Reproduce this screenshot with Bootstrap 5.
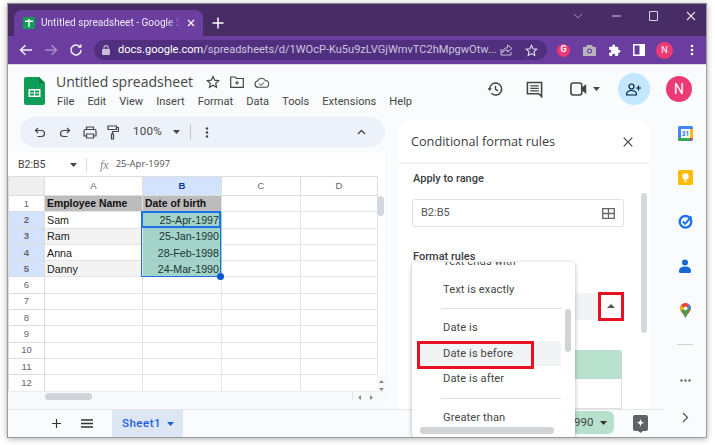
<!DOCTYPE html>
<html lang="en">
<head>
<meta charset="utf-8">
<title>Untitled spreadsheet</title>
<link href="https://cdn.jsdelivr.net/npm/bootstrap@5.3.0/dist/css/bootstrap.min.css" rel="stylesheet">
<style>
html,body{height:100%;margin:0;overflow:hidden;background:#fff}
body{font-family:Roboto,"Liberation Sans",sans-serif;color:#444746}
svg{flex:none}
.ml4{margin-left:4px}.ml5{margin-left:5px}.ml6{margin-left:6px}.ml7{margin-left:7px}.ml8{margin-left:8px}.ml9{margin-left:9px}.ml10{margin-left:10px}.ml11{margin-left:11px}.ml12{margin-left:12px}.ml13{margin-left:13px}.ml14{margin-left:14px}.ml15{margin-left:15px}.ml16{margin-left:16px}.ml17{margin-left:17px}.ml18{margin-left:18px}.ml20{margin-left:20px}.ml22{margin-left:22px}.ml27{margin-left:27px}
.gwin{position:relative;width:700px;height:435px;margin:3px 0 0 7px;background:#f9fbfd;border:1px solid #9a9a9a;border-top-color:#8a8a8a;box-shadow:0 1px 6px rgba(0,0,0,.32);overflow:hidden;display:flex;flex-direction:column}
.titlebar{height:32px;background:#472c66;flex:none;padding:6px 0 0 6px}
.gtab{width:189px;height:26px;background:#6b3fa0;border-radius:8px 8px 0 0;color:#efe9f6;font-size:10.1px;padding-left:9px;white-space:nowrap;overflow:hidden}
.ttl{width:140px;flex:none;overflow:hidden;margin-left:6px;-webkit-mask-image:linear-gradient(90deg,#000 90%,transparent)}
.winctl{margin-left:auto}
.winctl svg{display:block}
.chromebar{height:29px;background:#6a3d9f;flex:none;padding-left:10px;border-bottom:1px solid #e0dbe8}
.omni{width:453px;height:20px;margin-left:10px;background:#50307e;border-radius:10px;color:#cfc3e2;font-size:11.05px;padding:0 8px;white-space:nowrap;overflow:hidden;flex:none}
.omni b{font-weight:400;color:#fff}
.urltxt{width:373px;margin-left:8px}
.gchip{width:13px;height:13px;background:#15c39a;font-size:9px;font-weight:700}
.minin{width:17px;height:17px;font-size:9px;line-height:17px}
.appbody{flex:1;min-height:0;position:relative;display:flex;flex-direction:column}
.dochead{height:52px;flex:none;position:relative;padding-left:16px}
.logo{margin-top:12px}
.docwrap{margin-left:11px;padding-top:7px}
.doctitle{font-size:14px;color:#444746;line-height:20px;font-family:"Open Sans",Roboto,sans-serif}
.docmenu{font-size:11.1px;color:#444746;line-height:16px;gap:13px;margin-top:2px;padding-left:1px}
.headright{height:48px;padding-right:14px}
.sharebtn{margin-left:18px;width:32px;height:32px;border-radius:50%;background:#c2e7ff}
.docava{width:26px;height:26px;margin-left:16px;font-size:14px;line-height:26px}
.workarea{flex:1;min-height:0;display:flex}
.leftcol{width:390px;flex:none;display:flex;flex-direction:column;min-height:0}
.pill{height:30px;width:365px;margin-left:12px;background:#edf2fa;border-radius:15px;flex:none;position:relative}
.zoomtxt{margin-left:14px;font-size:11.6px;color:#444;letter-spacing:.2px}
.vdiv{width:1px;height:16px;background:#c7c7c7;margin-left:10px}
.collapse-i{margin-right:19px}
.namebar{height:23px;margin-top:6px;width:377px;background:#fff;font-size:10.5px;color:#444;flex:none}
.cellname{margin-left:10px;width:52px}
.nbdiv{margin-left:9px;width:1px;height:14px;background:#dadce0}
.fxi{margin-left:13px;font-family:"Liberation Serif",serif;font-style:italic;font-size:12px;color:#888}
.fxval{margin-left:7px;font-family:"Open Sans",sans-serif;font-size:9.5px;color:#555}
.sheetwrap{height:225px;width:377px;background:#fff;overflow:hidden;position:relative;flex:none}
table.gridt{table-layout:fixed;border-collapse:collapse;width:369px;font-family:"Liberation Sans",Arial,sans-serif;font-size:10.7px;color:#222}
.c0{width:36px}.c1{width:98px}.c2{width:79px}.c3{width:79px}.c4{width:77px}
table.gridt td,table.gridt th{border:1px solid #e4e4e4;padding:0 2px;height:16.3px;line-height:14px;overflow:hidden;white-space:nowrap;font-weight:400}
table.gridt thead th{height:19px;background:#fff;color:#666;text-align:center;font-size:9.5px;border-color:#ddd}
table.gridt thead th.corner{background:#efefef}
table.gridt th.rh{text-align:center;font-size:9.5px;color:#666;border-color:#ddd;padding:0}
table.gridt .selh{background:#d3e3fd;color:#0b3c8c;font-weight:600}
table.gridt td.hd{background:#bcbcbc;font-weight:700;color:#111;font-size:10.4px}
table.gridt td.alt{background:#f3f3f3}
table.gridt td.dt{background:#a3d3c9;text-align:right;border-color:#9ccec5;color:#1d3533}
.selbox{position:absolute;left:133px;top:35px;width:80px;height:66px;border:1px solid #1a73e8;pointer-events:none}
.selcur{position:absolute;left:133px;top:35px;width:80px;height:17px;border:2px solid #1a73e8}
.seldot{position:absolute;left:209px;top:97px;width:7px;height:7px;border-radius:50%;background:#0b57d0}
.vthumb{position:absolute;right:1px;top:20px;width:7px;height:20px;background:#d5d8dc;border-radius:4px}
.varr{position:absolute;right:0;top:199px;width:8px;height:26px;background:#f8f9fa}
.varr svg{display:block;margin:5px 0 0 2px}
.hstrip{position:absolute;left:0;right:0;bottom:0;height:10px;background:#f8f9fa;border-top:1px solid #eee}
.hthumb{position:absolute;left:37px;top:1px;width:47px;height:7px;background:#d0d3d8;border-radius:4px}
.harr{position:absolute;left:344px;top:0;width:25px;height:10px;border-left:1px solid #e4e4e4}
.harr svg{position:absolute;top:3px}
.ha1{left:5px}.ha2{left:17px}
.panel{width:252px;flex:none;height:289px;background:#fff;border-radius:14px 14px 0 0;position:relative;margin-top:3px}
.panelhead{height:44px;border-bottom:2px solid #f1f3f4;padding:1px 17px 0 13px;font-size:12.7px;color:#3c4043;font-family:"Open Sans",Roboto,sans-serif}
.lbl{font-size:11px;color:#3c4043;font-weight:500;margin-left:15px;line-height:16px}
.lbl1{margin-top:7px}.lbl2{margin-top:22px}
.rangebox{width:212px;height:28px;margin:12px 0 0 14px;border:1px solid #dfe1e5;border-radius:3px;font-size:11px;padding:0 8px;color:#555}
.selgray{width:186px;height:27px;margin:28px 0 0 15px;background:#f1f3f4;border-radius:3px}
.preview{width:210px;height:29px;margin:30px 0 0 14px;background:#b7e1cd;border-radius:3px 3px 0 0}
.previewb{width:210px;height:30px;margin-left:14px;border:1px solid #e0e0e0;border-top:0}
.pscroll{position:absolute;left:243px;top:73px;width:6px;height:140px;background:#d6d8dc;border-radius:3px}
.rail{flex:1;position:relative;padding-top:9px}
.railitem{height:44.2px;display:flex;justify-content:center;width:70px}
.raildiv{width:16px;margin:-3px 0 0 27px;border-color:#aaa;opacity:.5}
.raildots{margin-top:23px;height:26px;align-items:center}
.bottombar{height:28px;width:655px;flex:none;background:#f9fbfd;border-top:1px solid #e3e5e8;padding-left:44px}
.sheettab{height:100%;background:#dde6f5;color:#1a5fd6;font-size:11.5px;font-weight:500;padding:0 9px 0 10px;width:71px;margin-left:19px;letter-spacing:.5px}
.sumchip{position:absolute;left:533px;bottom:3px;width:73px;height:23px;background:#b7e1cd;border-radius:0 6px 6px 0;font-size:11.5px;color:#444;padding-left:33px;white-space:nowrap}
.explore{position:absolute;left:625px;bottom:4px}
.railnext{position:absolute;left:674px;bottom:14px}
.ddmenu{position:absolute;left:404px;top:197px;width:163px;height:175px;background:#fff;box-shadow:0 1px 4px rgba(60,64,67,.4);border-radius:3px;overflow:hidden;font-size:11.1px;color:#444746}
.dditem{height:25.4px;line-height:25px;width:144px;margin-left:5px;padding-left:26px;letter-spacing:.1px}
.ddclip{height:15px;line-height:1;margin-top:-6px}
.ddfirst{margin-top:6px}
.dditem.hov{background:#f1f3f4}
.ddsep{border-top:1px solid #e0e0e0;width:120px;margin:6px 0 6px 29px}
.ddv{position:absolute;left:153px;top:47px;width:6px;height:43px;background:#d2d4d8;border-radius:3px}
.ddh{position:absolute;left:8px;bottom:3px;width:134px;height:7px;background:#d2d4d8;border-radius:3px}
.redbox{position:absolute;border:3px solid #e81123;pointer-events:none}
.red1{left:590px;top:227px;width:26px;height:29px}
.red2{left:409px;top:276px;width:117px;height:28px}
.uparr{position:absolute;left:599px;top:239px}
.avatar{border-radius:50%;background:#ec3a74;color:#fff;text-align:center}
</style>
</head>
<body>
<div class="gwin">
  <div class="titlebar d-flex">
    <div class="gtab d-flex align-items-center">
      <svg width="12" height="12" viewBox="0 0 12 12"><rect width="12" height="12" rx="1" fill="#0f9d58"/><path d="M2 4.200h8M6 2v8" stroke="#fff" stroke-width="1.400"/></svg>
      <span class="ttl">Untitled spreadsheet - Google Sheets</span>
      <svg class="ml6" width="8" height="8" viewBox="0 0 8 8"><path d="M1 1l6 6M7 1L1 7" stroke="#fff" stroke-width="1.200"/></svg>
    </div>
    <svg class="ml6 mt-1" width="18" height="18" viewBox="0 0 18 18"><path d="M9 3.500v11M3.500 9h11" stroke="#fff" stroke-width="1.500"/></svg>
    <div class="winctl d-flex">
      <svg width="36" height="18" viewBox="0 0 36 18"><path d="M2 4l4 4 4-4" fill="none" stroke="#9b8cb0" stroke-width="1"/></svg>
      <svg width="36" height="18" viewBox="0 0 36 18"><path d="M4 6h9" stroke="#d6cfe0"/></svg>
      <svg width="36" height="18" viewBox="0 0 36 18"><path d="M5.500 1.500h8v9h-8z" fill="none" stroke="#d6cfe0"/></svg>
      <svg width="26" height="18" viewBox="0 0 26 18"><path d="M7 2l8 8M15 2l-8 8" stroke="#e6e0ee" stroke-width="1.100"/></svg>
    </div>
  </div>
  <div class="chromebar d-flex align-items-center">
    <svg width="16" height="14" viewBox="0 0 16 14"><path d="M14 7H3M7.500 2.200L2.500 7l5 4.800" fill="none" stroke="#f4f0f8" stroke-width="1.500"/></svg>
    <svg class="ml9" width="16" height="14" viewBox="0 0 16 14"><path d="M2 7h11M8.500 2.200l5 4.800-5 4.800" fill="none" stroke="#a98fcb" stroke-width="1.500"/></svg>
    <svg class="ml9" width="16" height="14" viewBox="0 0 16 14"><path d="M13 7a5 5 0 1 1-1.500-3.600" fill="none" stroke="#f4f0f8" stroke-width="1.500"/><path d="M13.500 .8v4h-4z" fill="#f4f0f8"/></svg>
    <div class="omni d-flex align-items-center">
      <svg width="8" height="10" viewBox="0 0 8 10"><rect y="4" width="8" height="6" rx="1" fill="#c9bddb"/><path d="M2 4V2.600a2 2 0 0 1 4 0V4" fill="none" stroke="#c9bddb" stroke-width="1.100"/></svg>
      <span class="urltxt"><b>docs.google.com</b>/spreadsheets/d/1WOcP-Ku5u9zLVGjWmvTC2hMpgwOtw...</span>
      <svg class="ml9" width="13" height="12" viewBox="0 0 13 12"><path d="M1 5v6h10V8M7.500 1l4.500 3.500L7.500 8V6C4.500 6 3 7 2 9c.3-3 2-5 5.500-5.200z" fill="none" stroke="#c9bddb" stroke-width="1"/></svg>
      <svg class="ml12" width="13" height="13" viewBox="0 0 24 24"><path d="M12 2.500l2.900 6.300 6.900.8-5.100 4.600 1.400 6.800L12 17.600 5.900 21l1.400-6.800-5.100-4.600 6.900-.8z" fill="none" stroke="#e7e0f0" stroke-width="2"/></svg>
    </div>
    <div class="d-flex align-items-center ml10">
      <div class="avatar gchip d-flex align-items-center justify-content-center">G</div>
      <svg class="ml13" width="13" height="12" viewBox="0 0 13 12"><path d="M0 3h3l1-2h5l1 2h3v9H0z" fill="#b9b5bd"/><circle cx="6.500" cy="7" r="2.500" fill="#6a3d9f"/><circle cx="6.500" cy="7" r="1.200" fill="#d8d6da"/></svg>
      <svg class="ml12" width="13" height="13" viewBox="0 0 24 24"><path d="M20.500 11H19V7a2 2 0 0 0-2-2h-4V3.500a2.500 2.500 0 0 0-5 0V5H4a2 2 0 0 0-2 2v3.800h1.500a2.700 2.700 0 0 1 0 5.400H2V20a2 2 0 0 0 2 2h3.800v-1.500a2.700 2.700 0 0 1 5.400 0V22H17a2 2 0 0 0 2-2v-4h1.500a2.500 2.500 0 0 0 0-5z" fill="#fff"/></svg>
      <svg class="ml12" width="12" height="12" viewBox="0 0 12 12"><path d="M0 0h12v12H0z" fill="#fff"/><path d="M1.500 1.500h5v9h-5z" fill="#6a3d9f"/></svg>
      <div class="avatar minin ml11">N</div>
      <svg class="ml17" width="4" height="12" viewBox="0 0 4 12"><circle cx="2" cy="2" r="1.300" fill="#fff"/><circle cx="2" cy="6" r="1.300" fill="#fff"/><circle cx="2" cy="10" r="1.300" fill="#fff"/></svg>
    </div>
  </div>
  <div class="appbody">
    <header class="dochead d-flex">
      <svg class="logo" width="21" height="28" viewBox="0 0 21 28"><path d="M2 0h13l6 6v20a2 2 0 0 1-2 2H2a2 2 0 0 1-2-2V2a2 2 0 0 1 2-2z" fill="#0f9d58"/><path d="M15 0l6 6h-6z" fill="#0b7a44"/><path d="M4.500 12h12v8h-12z" fill="#fff"/><path d="M6 13.600h4v1.800H6zM11 13.600h4v1.800h-4zM6 16.500h4v1.900H6zM11 16.500h4v1.900h-4z" fill="#0f9d58"/></svg>
      <div class="docwrap">
        <div class="d-flex align-items-center">
          <span class="doctitle">Untitled spreadsheet</span>
          <svg class="ml13" width="14" height="14" viewBox="0 0 24 24"><path d="M12 2.500l2.900 6.300 6.900.8-5.100 4.600 1.400 6.800L12 17.600 5.900 21l1.400-6.800-5.100-4.600 6.900-.8z" fill="none" stroke="#444" stroke-width="2"/></svg>
          <svg class="ml10" width="14" height="12" viewBox="0 0 14 12"><path d="M.7 1h4.500l1.300 1.500h6.800v8.800H.7z" fill="none" stroke="#444" stroke-width="1.200"/><path d="M7 4.800v4M5 6.800h4" stroke="#444"/></svg>
          <svg class="ml10" width="15" height="11" viewBox="0 0 15 11"><path d="M4 10.300a3.200 3.200 0 0 1-.5-6.300A4.300 4.300 0 0 1 11.300 3.500a3.400 3.400 0 0 1 0 6.800z" fill="none" stroke="#444" stroke-width="1.100"/><path d="M5 6.500l2 2 3-3.200" fill="none" stroke="#444"/></svg>
        </div>
        <nav class="d-flex docmenu"><span>File</span><span>Edit</span><span>View</span><span>Insert</span><span>Format</span><span>Data</span><span>Tools</span><span>Extensions</span><span>Help</span></nav>
      </div>
      <div class="d-flex align-items-center ms-auto headright">
        <svg width="17" height="16" viewBox="0 0 24 24"><path d="M3.200 12a9 9 0 1 1 2.600 6.400" fill="none" stroke="#444" stroke-width="2.200"/><path d="M0 11l3.200 4 3.400-4z" fill="#444"/><path d="M12 7v5.500l4 2.400" fill="none" stroke="#444" stroke-width="2"/></svg>
        <svg class="ml22" width="17" height="17" viewBox="0 0 24 24"><path d="M2 2h20v20l-4-4H2z" fill="none" stroke="#444" stroke-width="2.200"/><path d="M6 7h12M6 10.500h12M6 14h12" stroke="#444" stroke-width="1.700"/></svg>
        <svg class="ml27" width="17" height="14" viewBox="0 0 24 20"><rect x="1.200" y="1.500" width="15.500" height="17" rx="3" fill="none" stroke="#444" stroke-width="2.300"/><path d="M17 8l6-5v14l-6-5z" fill="#444"/></svg>
        <svg class="ml6" width="7" height="4" viewBox="0 0 7 4"><path d="M0 0h7L3.500 4z" fill="#444"/></svg>
        <div class="sharebtn d-flex align-items-center justify-content-center">
          <svg width="16" height="13" viewBox="0 0 16 13"><circle cx="5.500" cy="3.500" r="2.500" fill="none" stroke="#001d35" stroke-width="1.200"/><path d="M.7 12v-1.500c0-2 3-3 4.800-3s4.800 1 4.800 3V12z" fill="none" stroke="#001d35" stroke-width="1.200"/><path d="M12.500 2.500v5M10 5h5" stroke="#001d35" stroke-width="1.200"/></svg>
        </div>
        <div class="avatar docava">N</div>
      </div>
    </header>
    <div class="workarea">
      <div class="leftcol">
        <div class="pill d-flex align-items-center">
          <svg class="ml14" width="12" height="11" viewBox="0 0 12 11"><path d="M4 1L1.500 3.500 4 6M2 3.500h5.500a3 3 0 0 1 0 6H3.500" fill="none" stroke="#444" stroke-width="1.200"/></svg>
          <svg class="ml13" width="12" height="11" viewBox="0 0 12 11"><path d="M8 1l2.500 2.500L8 6M10 3.500H4.500a3 3 0 0 0 0 6H8.500" fill="none" stroke="#444" stroke-width="1.200"/></svg>
          <svg class="ml12" width="14" height="13" viewBox="0 0 14 13"><path d="M3.500 3.500V1h7v2.500M3.500 10H1V5a1.500 1.500 0 0 1 1.500-1.500h9A1.500 1.500 0 0 1 13 5v5h-2.500M3.500 8h7v4h-7z" fill="none" stroke="#444" stroke-width="1.200"/></svg>
          <svg class="ml10" width="12" height="15" viewBox="0 0 12 15"><path d="M1 1h8.500v3.500H1zM9.500 2.500H11.500v4H5.500v2.500M4.500 9h2v5h-2z" fill="none" stroke="#444" stroke-width="1.200"/></svg>
          <span class="zoomtxt">100%</span>
          <svg class="ml11" width="7" height="4" viewBox="0 0 7 4"><path d="M0 0h7L3.500 4z" fill="#444"/></svg>
          <span class="vdiv"></span>
          <svg class="ml14" width="4" height="11" viewBox="0 0 4 11"><circle cx="2" cy="1.500" r="1.200" fill="#444"/><circle cx="2" cy="5.500" r="1.200" fill="#444"/><circle cx="2" cy="9.500" r="1.200" fill="#444"/></svg>
          <svg class="ms-auto collapse-i" width="9" height="6" viewBox="0 0 9 6"><path d="M1 5l3.500-3.500L8 5" fill="none" stroke="#444" stroke-width="1.300"/></svg>
        </div>
        <div class="namebar d-flex align-items-center">
          <span class="cellname">B2:B5</span>
          <svg width="7" height="4" viewBox="0 0 7 4"><path d="M0 0h7L3.500 4z" fill="#444"/></svg>
          <span class="nbdiv"></span>
          <span class="fxi">fx</span>
          <span class="fxval">25-Apr-1997</span>
        </div>
        <div class="sheetwrap">
          <table class="gridt">
            <colgroup><col class="c0"><col class="c1"><col class="c2"><col class="c3"><col class="c4"></colgroup>
            <thead><tr><th class="corner"></th><th>A</th><th class="selh">B</th><th>C</th><th>D</th></tr></thead>
            <tbody>
              <tr><th class="rh">1</th><td class="hd">Employee Name</td><td class="hd">Date of birth</td><td></td><td></td></tr>
              <tr><th class="rh selh">2</th><td>Sam</td><td class="dt">25-Apr-1997</td><td></td><td></td></tr>
              <tr><th class="rh selh">3</th><td class="alt">Ram</td><td class="dt">25-Jan-1990</td><td></td><td></td></tr>
              <tr><th class="rh selh">4</th><td>Anna</td><td class="dt">28-Feb-1998</td><td></td><td></td></tr>
              <tr><th class="rh selh">5</th><td class="alt">Danny</td><td class="dt">24-Mar-1990</td><td></td><td></td></tr>
              <tr><th class="rh">6</th><td></td><td></td><td></td><td></td></tr>
              <tr><th class="rh">7</th><td></td><td></td><td></td><td></td></tr>
              <tr><th class="rh">8</th><td></td><td></td><td></td><td></td></tr>
              <tr><th class="rh">9</th><td></td><td></td><td></td><td></td></tr>
              <tr><th class="rh">10</th><td></td><td></td><td></td><td></td></tr>
              <tr><th class="rh">11</th><td></td><td></td><td></td><td></td></tr>
              <tr><th class="rh">12</th><td></td><td></td><td></td><td></td></tr>
              <tr><th class="rh">13</th><td></td><td></td><td></td><td></td></tr>
            </tbody>
          </table>
          <div class="selbox"></div><div class="selcur"></div><div class="seldot"></div>
          <div class="vthumb"></div>
          <div class="varr"><svg width="5" height="3" viewBox="0 0 5 3"><path d="M2.500 0L5 3H0z" fill="#888"/></svg><svg width="5" height="3" viewBox="0 0 5 3"><path d="M0 0h5L2.500 3z" fill="#888"/></svg></div>
          <div class="hstrip"><div class="hthumb"></div><div class="harr"><svg class="ha1" width="3" height="5" viewBox="0 0 3 5"><path d="M3 0v5L0 2.500z" fill="#888"/></svg><svg class="ha2" width="3" height="5" viewBox="0 0 3 5"><path d="M0 0v5l3-2.500z" fill="#888"/></svg></div></div>
        </div>
      </div>
      <aside class="panel">
        <div class="panelhead d-flex align-items-center justify-content-between">
          <span>Conditional format rules</span>
          <svg width="10" height="10" viewBox="0 0 10 10"><path d="M.7.700l8.600 8.600M9.300.700L.7 9.300" stroke="#444" stroke-width="1.200"/></svg>
        </div>
        <div class="lbl lbl1">Apply to range</div>
        <div class="rangebox d-flex align-items-center justify-content-between">
          <span>B2:B5</span>
          <svg width="13" height="11" viewBox="0 0 13 11"><path d="M.7.700h11.600v9.600H.7zM6.500.700v9.600M.7 5.500h11.600" fill="none" stroke="#666" stroke-width="1.300"/></svg>
        </div>
        <div class="lbl lbl2">Format rules</div>
        <div class="selgray"></div>
        <div class="preview"></div>
        <div class="previewb"></div>
        <div class="pscroll"></div>
      </aside>
      <div class="rail">
        <div class="railitem"><svg width="15" height="15" viewBox="0 0 15 15"><rect width="15" height="15" rx="1.500" fill="#4285f4"/><rect x="3" y="3" width="9" height="9" fill="#fff"/><path d="M12 3h3v9h-3z" fill="#fbbc04"/><path d="M0 12h12v3H1.500A1.500 1.500 0 0 1 0 13.500z" fill="#34a853"/><path d="M12 12h3l-3 3z" fill="#ea4335"/><text x="7.500" y="10" font-size="6.500" text-anchor="middle" fill="#1a73e8" font-family="Roboto" font-weight="700">31</text></svg></div>
        <div class="railitem"><svg width="15" height="15" viewBox="0 0 15 15"><rect width="15" height="15" rx="1.500" fill="#fbbc04"/><circle cx="7.500" cy="6.500" r="3.200" fill="#fff"/><rect x="6" y="10.500" width="3" height="1.300" fill="#fff"/></svg></div>
        <div class="railitem"><svg width="15" height="15" viewBox="0 0 15 15"><circle cx="7.500" cy="7.800" r="5.800" fill="none" stroke="#1a73e8" stroke-width="2.400"/><path d="M4.800 7.500l2.300 2.300L13.500 2.500" fill="none" stroke="#1a73e8" stroke-width="2"/></svg></div>
        <div class="railitem"><svg width="12" height="14" viewBox="0 0 12 14"><circle cx="6" cy="3.500" r="3" fill="#1967d2"/><path d="M1 14a2 2 0 0 1-1-2c0-3 2-4.500 6-4.500S12 9 12 12a2 2 0 0 1-1 2z" fill="#1967d2"/></svg></div>
        <div class="railitem"><svg width="11" height="15" viewBox="0 0 11 15"><path d="M5.500 0A5.300 5.300 0 0 1 11 5.300c0 3.700-4 5.500-5.500 9.700C4 10.800 0 9 0 5.300A5.300 5.300 0 0 1 5.500 0z" fill="#ea4335"/><path d="M1 8l4.500-4 5-.5C11 6 9 8 8 9.500L5.500 15 3 10z" fill="#34a853" opacity=".9"/><path d="M1 2.500L4 5 1 8C-.3 6 0 4 1 2.500z" fill="#fbbc04"/><path d="M8 .8l3 3-3 3z" fill="#4285f4"/><circle cx="5.500" cy="5.300" r="1.900" fill="#fff"/></svg></div>
        <hr class="raildiv">
        <div class="railitem raildots"><svg width="11" height="3" viewBox="0 0 11 3"><circle cx="1.500" cy="1.500" r="1.200" fill="#666"/><circle cx="5.500" cy="1.500" r="1.200" fill="#666"/><circle cx="9.500" cy="1.500" r="1.200" fill="#666"/></svg></div>
      </div>
    </div>
    <footer class="bottombar d-flex align-items-center">
      <svg width="9" height="9" viewBox="0 0 9 9"><path d="M4.500 0v9M0 4.500h9" stroke="#333" stroke-width="1.200"/></svg>
      <svg class="ml20" width="12" height="9" viewBox="0 0 12 9"><path d="M0 1h12M0 4.500h12M0 8h12" stroke="#333" stroke-width="1.300"/></svg>
      <div class="sheettab d-flex align-items-center justify-content-between"><span>Sheet1</span><svg width="7" height="4" viewBox="0 0 7 4"><path d="M0 0h7L3.500 4z" fill="#1a5fd6"/></svg></div>
      <div class="sumchip d-flex align-items-center"><span>990</span><svg class="ml7" width="7" height="4" viewBox="0 0 7 4"><path d="M0 0h7L3.500 4z" fill="#333"/></svg></div>
      <svg class="explore" width="15" height="18" viewBox="0 0 15 18"><path d="M2 0h11a2 2 0 0 1 2 2v12a2 2 0 0 1-2 2h-3l-2.500 2L5 16H2a2 2 0 0 1-2-2V2a2 2 0 0 1 2-2z" fill="#5f6368"/><path d="M7.500 3.500c.4 3 1 3.700 4 4.300-3 .6-3.600 1.300-4 4.200-.4-2.900-1-3.600-4-4.200 3-.6 3.600-1.300 4-4.300z" fill="#fff"/></svg>
      <svg class="railnext" width="7" height="11" viewBox="0 0 7 11"><path d="M1 1l4.500 4.500L1 10" fill="none" stroke="#555" stroke-width="1.300"/></svg>
    </footer>
    <div class="ddmenu">
      <div class="dditem ddclip">Text ends with</div>
      <div class="dditem ddfirst">Text is exactly</div>
      <div class="ddsep"></div>
      <div class="dditem">Date is</div>
      <div class="dditem hov">Date is before</div>
      <div class="dditem">Date is after</div>
      <div class="ddsep"></div>
      <div class="dditem">Greater than</div>
      <div class="ddv"></div><div class="ddh"></div>
    </div>
    <div class="redbox red1"></div>
    <svg class="uparr" width="8" height="4" viewBox="0 0 8 4"><path d="M4 0l4 4H0z" fill="#555"/></svg>
    <div class="redbox red2"></div>
  </div>
</div>
<script src="https://cdn.jsdelivr.net/npm/bootstrap@5.3.0/dist/js/bootstrap.bundle.min.js"></script>
</body>
</html>
